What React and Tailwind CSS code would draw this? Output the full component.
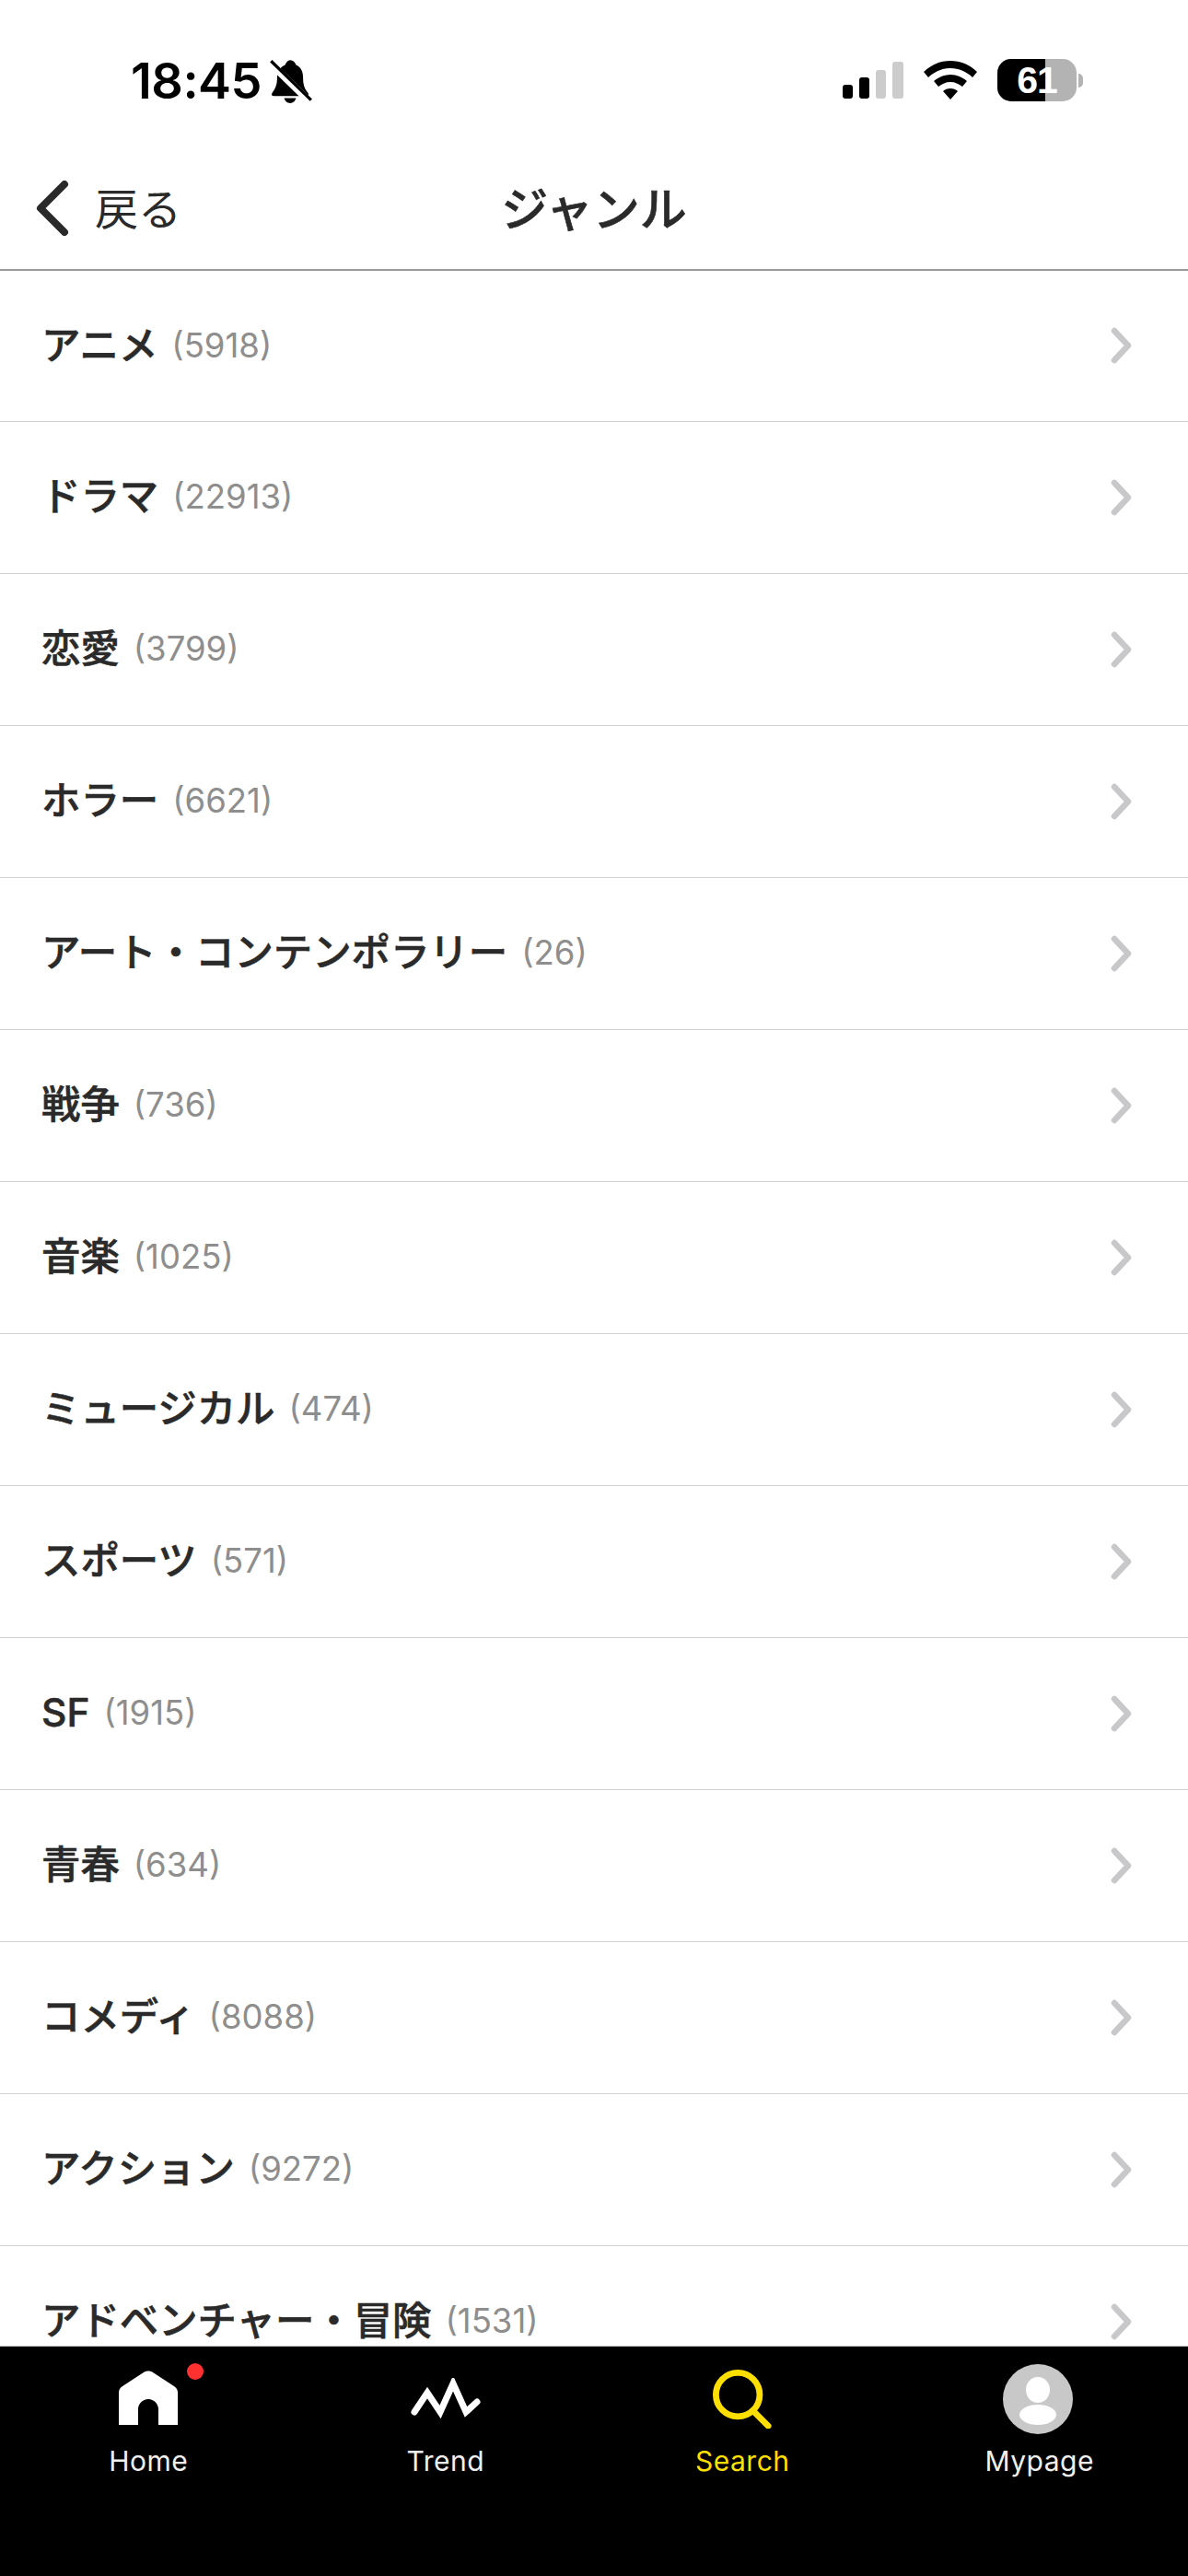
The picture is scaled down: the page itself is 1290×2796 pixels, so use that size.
const rows = [
  ["アニメ", "5918"],
  ["ドラマ", "22913"],
  ["恋愛", "3799"],
  ["ホラー", "6621"],
  ["アート・コンテンポラリー", "26"],
  ["戦争", "736"],
  ["音楽", "1025"],
  ["ミュージカル", "474"],
  ["スポーツ", "571"],
  ["SF", "1915"],
  ["青春", "634"],
  ["コメディ", "8088"],
  ["アクション", "9272"],
  ["アドベンチャー・冒険", "1531"],
];

const font = { fontFamily: '"Inter", "Noto Sans CJK JP", sans-serif' };

function Chevron() {
  return (
    <svg width="28" height="40" viewBox="0 0 28 40" className="shrink-0">
      <path d="M5 4 L20 20 L5 36" fill="none" stroke="#c8c8ca" strokeWidth="6.5" strokeLinecap="round" strokeLinejoin="round" />
    </svg>
  );
}

function Row({ name, count }) {
  return (
    <div className="h-[165px] first:h-[164px] shrink-0 flex items-center justify-between pl-[45px] pr-[57px] pb-px border-b border-[#d2d2d2]">
      <div className="flex items-center gap-[15px]">
        <span className="text-[42.4px] leading-none font-medium [-webkit-text-stroke:0.6px_#2a2a2a] text-[#2a2a2a]">{name}</span>
        <span className="text-[36.5px] leading-none text-[#8e8e8e]">({count})</span>
      </div>
      <Chevron />
    </div>
  );
}

function StatusBar() {
  return (
    <div className="h-[172px] shrink-0 flex items-start justify-between pl-[142px] pr-[114px] pt-[62px]">
      <div className="flex items-center gap-[6px] h-[52px]">
        <span className="text-[54px] leading-none font-semibold text-black tracking-[-0.5px]">18:45</span>
        <svg width="50" height="50" viewBox="0 0 46 46">
          <path d="M23 2c3 0 5 2 6 5 5 2 7 7 7 13 0 6 1 10 5 15 1 2 0 3-2 3H7c-2 0-3-1-2-3 3-4 5-8 5-14 0-7 3-12 8-14 1-3 3-5 5-5z" fill="#000" />
          <path d="M17 40h12c-1 3-3 5-6 5s-5-2-6-5z" fill="#000" />
          <path d="M3 5 L43 44" stroke="#fff" strokeWidth="7" />
          <path d="M4 3 L44 42" stroke="#000" strokeWidth="3" />
        </svg>
      </div>
      <div className="flex items-center gap-[22px] h-[46px] mt-[2px]">
        <svg width="66" height="40" viewBox="0 0 66 40">
          <rect x="0" y="25" width="11" height="15" rx="3" fill="#000" />
          <rect x="18" y="17" width="11" height="23" rx="3" fill="#000" />
          <rect x="36" y="9" width="11" height="31" rx="3" fill="#cccccc" />
          <rect x="54" y="0" width="12" height="40" rx="3" fill="#cccccc" />
        </svg>
        <svg width="58" height="42" viewBox="0 0 58 42">
          <path d="M29 0c11 0 21 4 29 12l-5 6C47 12 38 8 29 8S11 12 5 18L0 12C8 4 18 0 29 0z" fill="#000" />
          <path d="M29 15c7 0 13 3 18 7l-5 6c-4-3-8-5-13-5s-9 2-13 5l-5-6c5-4 11-7 18-7z" fill="#000" />
          <path d="M29 30c3 0 6 1 8 3l-8 9-8-9c2-2 5-3 8-3z" fill="#000" />
        </svg>
        <div className="flex items-center gap-[2px]">
          <div className="relative w-[86px] h-[46px] rounded-[15px] overflow-hidden bg-[#b3b3b3] flex items-center justify-center">
            <div className="absolute left-0 top-0 bottom-0 w-[52px] bg-black" />
            <span className="relative text-[41px] leading-none font-semibold text-white tracking-[-1px]" style={{ fontFamily: '"Liberation Sans", sans-serif' }}>61</span>
          </div>
          <div className="w-[5px] h-[15px] rounded-r-full bg-[#b3b3b3]" />
        </div>
      </div>
    </div>
  );
}

function Header() {
  return (
    <div className="relative h-[122px] shrink-0 flex items-center justify-center border-b-2 border-[#9a9a9a]">
      <div className="absolute left-[38px] top-[24px] flex items-center gap-[25px]">
        <svg width="40" height="60" viewBox="0 0 40 60">
          <path d="M32 4 L6 30 L32 56" fill="none" stroke="#2a2a2a" strokeWidth="8" strokeLinecap="round" strokeLinejoin="round" />
        </svg>
        <span className="text-[47px] leading-none text-[#2a2a2a]">戻る</span>
      </div>
      <span className="text-[51px] leading-none font-medium [-webkit-text-stroke:0.6px_#2a2a2a] text-[#2a2a2a] mb-[10px]">ジャンル</span>
    </div>
  );
}

function Tab({ label, color = "text-[#f0f0f0]", children }) {
  return (
    <div className="flex flex-col items-center">
      <div className="relative h-[80px] w-full flex items-center justify-center">{children}</div>
      <span className={`mt-[12px] text-[30px] leading-none tracking-[0.5px] ${color}`}>{label}</span>
    </div>
  );
}

function TabBar() {
  return (
    <div className="h-[250px] shrink-0 bg-black border-t border-[#c0c0c0] grid grid-cols-4 pt-[17px]">
      <Tab label="Home">
        <div className="relative mb-[4px]">
          <svg width="64" height="60" viewBox="0 0 64 60" className="block">
            <path d="M0 60V25c0-3 1-5 4-7L27 3c3-2 7-2 10 0l23 15c3 2 4 4 4 7v35H43V43c0-6-5-11-11-11S21 37 21 43v17z" fill="#fff" />
          </svg>
          <div className="absolute left-[74px] top-[-7px] w-[18px] h-[18px] rounded-full bg-[#ff3030]" />
        </div>
      </Tab>
      <Tab label="Trend">
        <svg width="76" height="46" viewBox="0 1 76 46">
          <path d="M4 38 L18 17 L32 38 L46 7 L60 38 L72 27" fill="none" stroke="#fff" strokeWidth="7" strokeLinecap="round" strokeLinejoin="miter" />
        </svg>
      </Tab>
      <Tab label="Search" color="text-[#ffdf00]">
        <svg width="64" height="64" viewBox="0 0 66 66">
          <circle cx="28" cy="28" r="24.5" fill="none" stroke="#ffdf00" strokeWidth="7" />
          <path d="M45 46 L62 63" stroke="#ffdf00" strokeWidth="7" strokeLinecap="round" />
        </svg>
      </Tab>
      <Tab label="Mypage">
        <svg width="76" height="76" viewBox="0 0 76 76" className="mr-[3px]">
          <circle cx="38" cy="38" r="38" fill="#c8c8c8" />
          <ellipse cx="38" cy="28" rx="13" ry="14" fill="#fff" />
          <ellipse cx="38" cy="55" rx="20" ry="11" fill="#fff" />
        </svg>
      </Tab>
    </div>
  );
}

export default function App() {
  return (
    <div className="w-[1290px] h-[2796px] bg-white flex flex-col overflow-hidden" style={font}>
      <StatusBar />
      <Header />
      <div className="flex-1 min-h-0 overflow-hidden flex flex-col">
        {rows.map(([n, c]) => (
          <Row key={n} name={n} count={c} />
        ))}
      </div>
      <TabBar />
    </div>
  );
}
